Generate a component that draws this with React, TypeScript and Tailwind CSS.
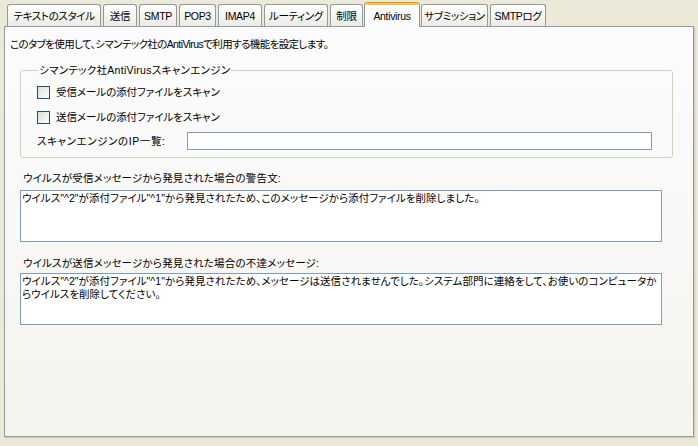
import React from "react";

const tabs = [
  { label: "テキストのスタイル", w: 94 },
  { label: "送信", w: 34 },
  { label: "SMTP", w: 38 },
  { label: "POP3", w: 37 },
  { label: "IMAP4", w: 44 },
  { label: "ルーティング", w: 64 },
  { label: "制限", w: 33 },
  { label: "Antivirus", w: 56, active: true },
  { label: "サブミッション", w: 67 },
  { label: "SMTPログ", w: 56 },
];

function Checkbox() {
  return (
    <span className="inline-block w-[13px] h-[13px] border border-[#1C5180] bg-gradient-to-br from-[#DCDCD7] to-[#FFFFFF] shrink-0" />
  );
}

export default function App() {
  return (
    <div
      className="w-[698px] h-[446px] bg-[#ECE9D8] text-[10.5px] tracking-[-0.05px] leading-[14px] text-black pl-[4px] [font-feature-settings:'palt'] whitespace-nowrap"
      style={{ fontFamily: '"Liberation Sans", "Noto Sans CJK JP", sans-serif' }}
    >
      <div className="flex items-end h-[26px] gap-[2px] pl-[3px] relative z-10 tracking-[-0.35px]">
        {tabs.map((t) =>
          t.active ? (
            <div
              key={t.label}
              style={{ width: t.w }}
              className="h-[25px] -mx-[1px] mb-[-1px] flex flex-col border-x border-[#919B9C] rounded-t-[3px] overflow-hidden bg-[#FCFCFE]"
            >
              <div className="h-[1px] bg-[#E68B2C]" />
              <div className="h-[2px] bg-[#FFC73C]" />
              <div className="flex-1 flex items-center justify-center pb-[1px]">{t.label}</div>
            </div>
          ) : (
            <div
              key={t.label}
              style={{ width: t.w }}
              className="h-[22px] flex items-center justify-center border border-b-0 border-[#919B9C] rounded-t-[3px] bg-gradient-to-b from-[#FFFFFF] to-[#ECEBE6] pt-[1px]"
            >
              {t.label}
            </div>
          )
        )}
      </div>
      <div className="w-[690px] h-[411px] border border-[#919B9C] bg-gradient-to-b from-[#FCFCFE] to-[#F4F3EE] shadow-[1px_1px_0_#D0CEBF,2px_2px_0_#E3E0D0] px-[3px] pt-[10px]">
        <div className="h-[14px] flex items-center pl-[2px] tracking-[-0.6px]">このタブを使用して、シマンテック社のAntiVirusで利用する機能を設定します。</div>
        <fieldset className="mt-[12px] ml-[12px] w-[653px] border border-[#D0D0BF] rounded-[3px] pl-[16px] pb-[7px]">
          <legend className="ml-[1px] px-[1px] h-[14px] tracking-[0.3px]">シマンテック社AntiVirusスキャンエンジン</legend>
          <div className="mt-[7px] h-[16px] flex items-center gap-[6px]">
            <Checkbox />
            <span>受信メールの添付ファイルをスキャン</span>
          </div>
          <div className="mt-[9px] h-[16px] flex items-center gap-[6px]">
            <Checkbox />
            <span>送信メールの添付ファイルをスキャン</span>
          </div>
          <div className="mt-[7px] h-[18px] flex items-center">
            <span className="w-[150px] tracking-[0.6px]">スキャンエンジンのIP一覧:</span>
            <div className="w-[465px] h-[18px] border border-[#7F9DB9] bg-white" />
          </div>
        </fieldset>
        <div className="mt-[13px] ml-[15px] h-[14px] flex items-center tracking-[0.2px]">ウイルスが受信メッセージから発見された場合の警告文:</div>
        <div className="mt-[5px] ml-[12px] w-[642px] h-[52px] border border-[#7F9DB9] bg-white px-[1px] pt-[1px] leading-[13px] tracking-[0.05px]">
          ウイルス"^2"が添付ファイル"^1"から発見されたため、このメッセージから添付ファイルを削除しました。
        </div>
        <div className="mt-[14px] ml-[15px] h-[14px] flex items-center tracking-[0.2px]">ウイルスが送信メッセージから発見された場合の不達メッセージ:</div>
        <div className="mt-[3px] ml-[12px] w-[642px] h-[52px] border border-[#7F9DB9] bg-white px-[1px] pt-[1px] leading-[13px] tracking-[0.05px]">
          ウイルス"^2"が添付ファイル"^1"から発見されたため、メッセージは送信されませんでした。システム部門に連絡をして、お使いのコンピュータか
          <br />
          らウイルスを削除してください。
        </div>
      </div>
    </div>
  );
}
